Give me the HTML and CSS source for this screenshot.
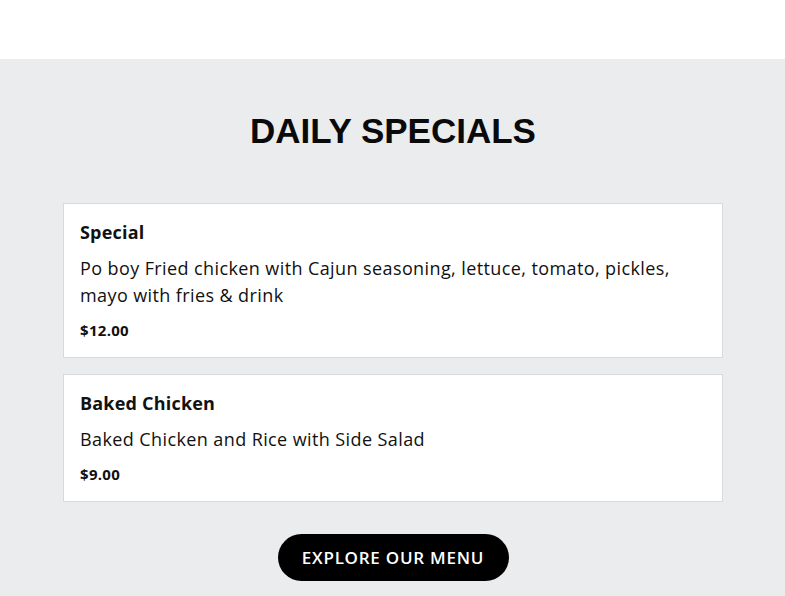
FILE: index.html
```html
<!DOCTYPE html>
<html lang="en">
<head>
<meta charset="utf-8">
<title>Daily Specials</title>
<link rel="stylesheet" href="styles.css">
</head>
<body>
<header class="top"></header>
<section class="specials">
  <h2 class="specials-title">DAILY SPECIALS</h2>
  <div class="cards">
    <article class="card">
      <h3 class="card-title">Special</h3>
      <p class="card-desc">Po boy Fried chicken with Cajun seasoning, lettuce, tomato, pickles, mayo with fries &amp; drink</p>
      <p class="card-price">$12.00</p>
    </article>
    <article class="card">
      <h3 class="card-title">Baked Chicken</h3>
      <p class="card-desc">Baked Chicken and Rice with Side Salad</p>
      <p class="card-price">$9.00</p>
    </article>
  </div>
  <div class="actions">
    <a class="btn" href="#">EXPLORE OUR MENU</a>
  </div>
</section>
</body>
</html>
```
FILE: styles.css
```css
* { box-sizing: border-box; }
html, body { margin: 0; padding: 0; }
body {
  font-family: "Open Sans", "Liberation Sans", sans-serif;
  color: #111;
  background: #ebecee;
}
.top {
  height: 59px;
  background: #fff;
}
.specials {
  padding: 49px 62px 20px 63px;
}
.specials-title {
  margin: 0 0 49px;
  text-align: center;
  font-family: "Liberation Sans", Arial, sans-serif;
  font-weight: 700;
  font-size: 35px;
  line-height: 46px;
  color: #0a0a0a;
}
.cards {
  display: flex;
  flex-direction: column;
  gap: 16px;
}
.card {
  background: #fff;
  border: 1px solid #d9dadc;
  padding: 16px 16px 16px;
}
.card-title {
  margin: 0 0 10px;
  font-size: 18px;
  font-weight: 700;
  line-height: 25px;
  letter-spacing: 0.2px;
  color: #111;
}
.card-desc {
  margin: 0 0 10px;
  font-size: 18px;
  line-height: 27px;
  letter-spacing: 0.4px;
  color: #111;
}
.card-price {
  margin: 0;
  font-size: 15px;
  font-weight: 700;
  line-height: 22px;
  letter-spacing: 0.3px;
  color: #111;
}
.actions {
  display: flex;
  justify-content: center;
  margin-top: 32px;
}
.btn {
  display: inline-flex;
  align-items: center;
  justify-content: center;
  width: 231px;
  height: 47px;
  border-radius: 24px;
  background: #000;
  color: #fff;
  text-decoration: none;
  font-size: 17px;
  font-weight: 600;
  letter-spacing: 0.75px;
}
```
